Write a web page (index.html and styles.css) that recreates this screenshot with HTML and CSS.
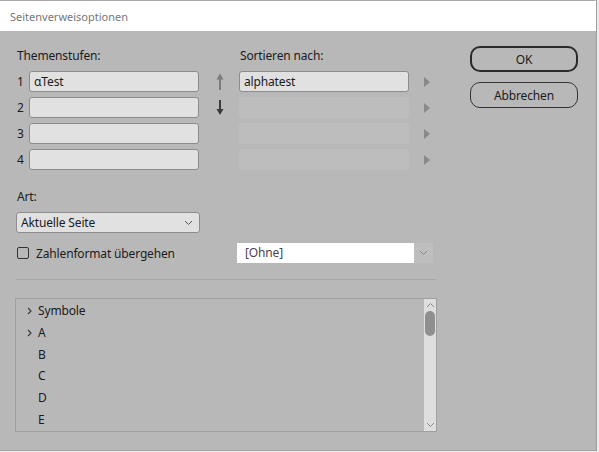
FILE: index.html
```html
<!DOCTYPE html>
<html lang="de">
<head>
<meta charset="utf-8">
<title>Seitenverweisoptionen</title>
<link rel="stylesheet" href="styles.css">
</head>
<body>
<div class="dialog">
  <div class="topline"></div>
  <div class="titlebar">Seitenverweisoptionen</div>
  <div class="content">
    <div class="main">
      <div class="levels">
        <div class="lbl lbl-left">Themenstufen:</div>
        <div class="lbl lbl-right">Sortieren nach:</div>

        <div class="num">1</div>
        <div class="field">αTest</div>
        <div class="arrow">
          <svg width="8" height="17" viewBox="0 0 8 17"><polygon points="0.5,6.5 4,0.5 7.5,6.5" fill="#7c7c7c"/><rect x="3" y="5" width="2" height="12" fill="#7c7c7c"/></svg>
        </div>
        <div class="field">alphatest</div>
        <div class="tri"><svg width="6" height="10" viewBox="0 0 6 10"><polygon points="0,0 6,5 0,10" fill="#8a8a8a"/></svg></div>

        <div class="num">2</div>
        <div class="field"></div>
        <div class="arrow">
          <svg width="8" height="16" viewBox="0 0 8 16"><rect x="3" y="0" width="2" height="10" fill="#3a3a3a"/><polygon points="0.5,9 4,15 7.5,9" fill="#3a3a3a"/></svg>
        </div>
        <div class="field disabled"></div>
        <div class="tri"><svg width="6" height="10" viewBox="0 0 6 10"><polygon points="0,0 6,5 0,10" fill="#8a8a8a"/></svg></div>

        <div class="num">3</div>
        <div class="field"></div>
        <div class="arrow"></div>
        <div class="field disabled"></div>
        <div class="tri"><svg width="6" height="10" viewBox="0 0 6 10"><polygon points="0,0 6,5 0,10" fill="#8a8a8a"/></svg></div>

        <div class="num">4</div>
        <div class="field"></div>
        <div class="arrow"></div>
        <div class="field disabled"></div>
        <div class="tri"><svg width="6" height="10" viewBox="0 0 6 10"><polygon points="0,0 6,5 0,10" fill="#8a8a8a"/></svg></div>
      </div>

      <div class="art-label">Art:</div>
      <div class="select">
        <span>Aktuelle Seite</span>
        <svg width="9" height="6" viewBox="0 0 9 6"><polyline points="1,1 4.5,4.5 8,1" fill="none" stroke="#555" stroke-width="1"/></svg>
      </div>

      <div class="check-row">
        <label class="check"><span class="box"></span><span>Zahlenformat übergehen</span></label>
        <div class="combo">
          <div class="combo-field">[Ohne]</div>
          <div class="combo-btn"><svg width="9" height="6" viewBox="0 0 9 6"><polyline points="1,1 4.5,4.5 8,1" fill="none" stroke="#8a8a8a" stroke-width="1"/></svg></div>
        </div>
      </div>

      <div class="sep"></div>

      <div class="list">
        <div class="items">
          <div class="item"><span class="exp"><svg width="5" height="8" viewBox="0 0 5 8"><polyline points="1,1 4,4 1,7" fill="none" stroke="#3c3c3c" stroke-width="1.2"/></svg></span>Symbole</div>
          <div class="item"><span class="exp"><svg width="5" height="8" viewBox="0 0 5 8"><polyline points="1,1 4,4 1,7" fill="none" stroke="#3c3c3c" stroke-width="1.2"/></svg></span>A</div>
          <div class="item"><span class="exp"></span>B</div>
          <div class="item"><span class="exp"></span>C</div>
          <div class="item"><span class="exp"></span>D</div>
          <div class="item"><span class="exp"></span>E</div>
        </div>
        <div class="scrollbar">
          <svg class="sb-up" width="9" height="6" viewBox="0 0 9 6"><polyline points="1,5 4.5,1.5 8,5" fill="none" stroke="#8a8a8a" stroke-width="1"/></svg>
          <div class="thumb"></div>
          <div class="sb-space"></div>
          <svg class="sb-down" width="9" height="6" viewBox="0 0 9 6"><polyline points="1,1 4.5,4.5 8,1" fill="none" stroke="#8a8a8a" stroke-width="1"/></svg>
        </div>
      </div>
    </div>

    <div class="buttons">
      <div class="btn btn-default">OK</div>
      <div class="btn">Abbrechen</div>
    </div>
  </div>
</div>
</body>
</html>
```
FILE: styles.css
```css
html, body {
  margin: 0;
  padding: 0;
  background: #ececec;
}
body {
  width: 599px;
  height: 452px;
  overflow: hidden;
  font-family: "Noto Sans", "Open Sans", sans-serif;
  font-size: 12px;
  letter-spacing: -0.15px;
  color: #1b1b1b;
}
.dialog {
  width: 597px;
  height: 451px;
  background: #b8b8b8;
  border-right: 1px solid #9d9d9d;
  border-bottom: 1px solid #a2a2a2;
  box-sizing: border-box;
  display: flex;
  flex-direction: column;
}
.topline {
  height: 1px;
  background: #a8a8a8;
  margin-right: 2px;
}
.titlebar {
  height: 30px;
  line-height: 31px;
  background: #ffffff;
  color: #777777;
  padding-left: 10px;
  font-size: 11px;
  letter-spacing: 0;
}
.content {
  display: flex;
  padding: 15px 0 0 16px;
}
.main {
  width: 421px;
  display: flex;
  flex-direction: column;
}
.levels {
  display: grid;
  grid-template-columns: 13px 170px 40px 170px 28px;
  grid-template-rows: 20px repeat(4, 21px);
  row-gap: 5px;
  align-items: center;
}
.lbl {
  line-height: 22px;
  padding-left: 1px;
}
.lbl-left { grid-column: 1 / 3; }
.lbl-right { grid-column: 4 / 6; }
.num {
  padding-left: 1px;
  line-height: 21px;
}
.field {
  height: 21px;
  box-sizing: border-box;
  background: #e1e1e1;
  border: 1px solid #8c8c8c;
  border-radius: 3px;
  padding-left: 4px;
  line-height: 19px;
  white-space: nowrap;
}
.field.disabled {
  background: #bdbdbd;
  border-color: #bdbdbd;
  border-radius: 2px;
}
.arrow {
  display: flex;
  justify-content: center;
  height: 21px;
  align-items: center;
  padding-left: 1px;
}
.tri {
  display: flex;
  align-items: center;
  padding-left: 15px;
  height: 21px;
}
.art-label {
  margin-top: 17px;
  line-height: 20px;
  padding-left: 1px;
}
.select {
  margin-top: 5px;
  width: 184px;
  height: 21px;
  box-sizing: border-box;
  background: #e1e1e1;
  border: 1px solid #8c8c8c;
  border-radius: 3px;
  padding: 0 6px 0 4px;
  display: flex;
  align-items: center;
  justify-content: space-between;
}
.check-row {
  margin-top: 10px;
  height: 20px;
  display: flex;
  align-items: center;
}
.check {
  display: flex;
  align-items: center;
  width: 220px;
  padding-left: 1px;
}
.box {
  width: 12px;
  height: 12px;
  box-sizing: border-box;
  border: 1px solid #333333;
  border-radius: 2px;
  margin-right: 7px;
}
.combo {
  display: flex;
  height: 20px;
}
.combo-field {
  width: 177px;
  background: #ffffff;
  color: #4b4052;
  line-height: 20px;
  padding-left: 8px;
  box-sizing: border-box;
}
.combo-btn {
  width: 19px;
  background: #bebebe;
  display: flex;
  align-items: center;
  justify-content: center;
}
.sep {
  margin-top: 16px;
  height: 1px;
  width: 420px;
  background: #a6a6a6;
}
.list {
  margin-top: 18px;
  margin-left: -1px;
  width: 422px;
  height: 134px;
  box-sizing: border-box;
  border: 1px solid #a0a0a0;
  display: flex;
}
.items {
  flex: 1;
  padding-top: 1px;
}
.item {
  height: 21.8px;
  line-height: 21.8px;
  display: flex;
  align-items: center;
}
.exp {
  width: 22px;
  padding-left: 11px;
  box-sizing: border-box;
  display: flex;
  align-items: center;
}
.scrollbar {
  width: 12px;
  background: #dedede;
  display: flex;
  flex-direction: column;
  align-items: center;
}
.sb-up { margin-top: 3px; }
.thumb {
  margin-top: 3px;
  width: 10px;
  height: 25px;
  border-radius: 5px;
  background: #8f8f8f;
}
.sb-space { flex: 1; }
.sb-down { margin-bottom: 3px; }
.buttons {
  margin-left: 33px;
  display: flex;
  flex-direction: column;
  gap: 10px;
}
.btn {
  width: 108px;
  height: 26px;
  box-sizing: border-box;
  border: 1px solid #333333;
  border-radius: 10px;
  display: flex;
  align-items: center;
  justify-content: center;
  color: #1b1b1b;
}
.btn-default {
  border: 2px solid #2a2a2a;
}
```
